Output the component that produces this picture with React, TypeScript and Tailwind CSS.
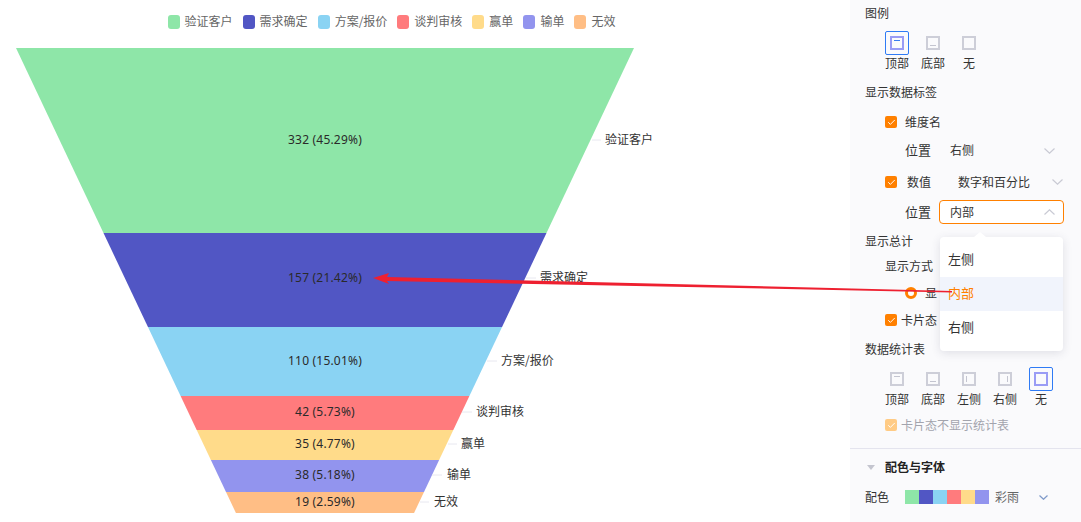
import React from 'react';
import { Check } from 'lucide-react';

const FONT = '"Noto Sans CJK SC", sans-serif';
const VALUE_FONT = '"Noto Sans", "Noto Sans CJK SC", sans-serif';

const LEGEND = [
  { name: '验证客户', color: '#8ee6a8' },
  { name: '需求确定', color: '#5156c4' },
  { name: '方案/报价', color: '#8ad3f3' },
  { name: '谈判审核', color: '#ff7b7d' },
  { name: '赢单', color: '#ffdb8a' },
  { name: '输单', color: '#9294ee' },
  { name: '无效', color: '#ffbe85' },
];

// funnel slices: top y, bottom y, value text, label position and leader line
const SLICES = [
  { y0: 48, y1: 233, value: '332 (45.29%)', vy: 140, lx: 605, ly: 140, l0: 592, l1: 601 },
  { y0: 233, y1: 327, value: '157 (21.42%)', vy: 278, lx: 540, ly: 278, l0: 526, l1: 536 },
  { y0: 327, y1: 396, value: '110 (15.01%)', vy: 361, lx: 501, ly: 361, l0: 487, l1: 497 },
  { y0: 396, y1: 430, value: '42 (5.73%)', vy: 412, lx: 476, ly: 412, l0: 462, l1: 472 },
  { y0: 430, y1: 460, value: '35 (4.77%)', vy: 444, lx: 461, ly: 444, l0: 448, l1: 457 },
  { y0: 460, y1: 492, value: '38 (5.18%)', vy: 475, lx: 447, ly: 475, l0: 432, l1: 442 },
  { y0: 492, y1: 513, value: '19 (2.59%)', vy: 502, lx: 434, ly: 502, l0: 420, l1: 429 },
];

const leftAt = (y: number) => 16 + (y - 48) * 0.473;
const rightAt = (y: number) => 634 - (y - 48) * 0.473;

function Funnel() {
  return (
    <svg width={850} height={478} viewBox="0 44 850 478" className="block">
      {SLICES.map((s, i) => (
        <polygon
          key={i}
          fill={LEGEND[i].color}
          points={`${leftAt(s.y0)},${s.y0} ${rightAt(s.y0)},${s.y0} ${rightAt(s.y1)},${s.y1} ${leftAt(s.y1)},${s.y1}`}
        />
      ))}
      {SLICES.map((s, i) => (
        <g key={i} fontSize={12}>
          <text
            x={325}
            y={s.vy}
            dy="0.36em"
            textAnchor="middle"
            fill="#2a2a2a"
            letterSpacing={0.2}
            style={{ fontFamily: VALUE_FONT }}
          >
            {s.value}
          </text>
          <line x1={s.l0} x2={s.l1} y1={s.ly} y2={s.ly} stroke="#e8e8f0" strokeWidth={1} />
          <text x={s.lx} y={s.ly} dy="0.36em" fill="#333333" style={{ fontFamily: FONT }}>
            {LEGEND[i].name}
          </text>
        </g>
      ))}
    </svg>
  );
}

function Chevron({ up, className }: { up?: boolean; className?: string }) {
  return (
    <svg width={11} height={6} viewBox="0 0 11 6" className={className}>
      <polyline
        points={up ? '0.5,5.5 5.5,0.8 10.5,5.5' : '0.5,0.5 5.5,5.2 10.5,0.5'}
        fill="none"
        stroke="#c9cad4"
        strokeWidth={1.2}
      />
    </svg>
  );
}

type Mark = 'top' | 'bottom' | 'left' | 'right' | 'none';

function LayoutIcon({ mark, label, active }: { mark: Mark; label: string; active?: boolean }) {
  const stroke = active ? '#9a9cf5' : '#cdced8';
  const tick = active ? '#3a7cf0' : '#c4c5d0';
  return (
    <div className="flex w-[36px] flex-col items-center">
      <div
        className={`flex h-[24px] w-[24px] items-center justify-center rounded-[2px] border ${
          active ? 'border-[#2f7bf5]' : 'border-transparent'
        }`}
      >
        <svg width={14} height={14} viewBox="0 0 14 14">
          <rect x={1} y={1} width={12} height={12} fill="none" stroke={stroke} strokeWidth={2} />
          {mark === 'top' && <line x1={4} x2={10} y1={4.5} y2={4.5} stroke={tick} />}
          {mark === 'bottom' && <line x1={4} x2={10} y1={9.5} y2={9.5} stroke={tick} />}
          {mark === 'left' && <line x1={4.5} x2={4.5} y1={4} y2={10} stroke={tick} />}
          {mark === 'right' && <line x1={9.5} x2={9.5} y1={4} y2={10} stroke={tick} />}
        </svg>
      </div>
      <div className="flex h-[16px] items-center text-xs leading-none text-[#333]">{label}</div>
    </div>
  );
}

function Checkbox({ muted }: { muted?: boolean }) {
  return (
    <span
      className={`flex h-[12px] w-[12px] shrink-0 items-center justify-center rounded-[2px] ${
        muted ? 'bg-[#ffcb85]' : 'bg-[#ff8000]'
      }`}
    >
      <Check size={9} color="#fff" strokeWidth={2.5} />
    </span>
  );
}

function ConfigPanel() {
  return (
    <div className="h-[522px] w-[231px] shrink-0 overflow-hidden bg-[#fafafc] text-xs leading-none text-[#333]">
      <div className="flex h-[26px] items-center pl-[15px]">图例</div>
      <div className="flex pl-[29px] pt-[5px]">
        <LayoutIcon mark="top" label="顶部" active />
        <LayoutIcon mark="bottom" label="底部" />
        <LayoutIcon mark="none" label="无" />
      </div>
      <div className="flex h-[42px] items-center pl-[15px]">显示数据标签</div>
      <div className="flex h-[18px] items-center gap-[8px] pl-[35px]">
        <Checkbox />
        <span>维度名</span>
      </div>
      <div className="flex h-[38px] items-center pl-[55px]">
        <span className="w-[45px] pb-[2px] text-[13px]">位置</span>
        <span>右侧</span>
        <Chevron className="ml-[70px] mt-[2px]" />
      </div>
      <div className="flex h-[26px] items-center pl-[35px]">
        <Checkbox />
        <span className="ml-[10px]">数值</span>
        <span className="ml-[27px]">数字和百分比</span>
        <Chevron className="ml-[22px]" />
      </div>
      <div className="flex h-[34px] items-center pl-[55px]">
        <span className="w-[34px] pb-[2px] text-[13px]">位置</span>
        <div className="flex h-[24px] w-[125px] items-center justify-between rounded-[4px] border border-[#ff8000] bg-white pl-[10px] pr-[8px]">
          <span>内部</span>
          <Chevron up />
        </div>
      </div>
      <div className="flex h-[24px] items-center pl-[15px]">显示总计</div>
      <div className="flex h-[26px] items-center pl-[35px]">显示方式</div>
      <div className="flex h-[28px] items-center gap-[8px] pl-[55px]">
        <span className="h-[12px] w-[12px] rounded-full border-[3px] border-[#ff8000] bg-white" />
        <span>显</span>
      </div>
      <div className="flex h-[26px] items-center gap-[4px] pl-[35px]">
        <Checkbox />
        <span>卡片态</span>
      </div>
      <div className="flex h-[32px] items-center pl-[15px]">数据统计表</div>
      <div className="flex pl-[29px] pt-[2px]">
        <LayoutIcon mark="top" label="顶部" />
        <LayoutIcon mark="bottom" label="底部" />
        <LayoutIcon mark="left" label="左侧" />
        <LayoutIcon mark="right" label="右侧" />
        <LayoutIcon mark="none" label="无" active />
      </div>
      <div className="flex h-[36px] items-center gap-[4px] pl-[35px] text-[#a3a4ad]">
        <Checkbox muted />
        <span>卡片态不显示统计表</span>
      </div>
      <div className="h-[6px] border-b border-[#e4e4ee]" />
      <div className="flex h-[36px] items-center pl-[17px]">
        <span className="h-0 w-0 border-x-[4px] border-t-[5px] border-x-transparent border-t-[#c4c5cf]" />
        <span className="ml-[10px] font-bold text-[#222]">配色与字体</span>
      </div>
      <div className="flex h-[24px] items-center pl-[15px]">
        <span className="w-[40px]">配色</span>
        <span className="flex">
          {LEGEND.slice(0, 6).map((l) => (
            <span key={l.name} className="h-[14px] w-[14px]" style={{ background: l.color }} />
          ))}
        </span>
        <span className="ml-[6px] text-[#666]">彩雨</span>
        <svg width={9} height={5} viewBox="0 0 9 5" className="ml-[20px]">
          <polyline points="0.5,0.5 4.5,4.3 8.5,0.5" fill="none" stroke="#7f9ac9" strokeWidth={1.2} />
        </svg>
      </div>
    </div>
  );
}

function DropdownMenu() {
  return (
    <div className="absolute left-[940px] top-[237px] w-[123px] rounded-[4px] bg-white py-[6px] text-[13px] leading-none text-[#333] shadow-[0_2px_10px_rgba(60,60,90,0.14)]">
      <span className="absolute -top-[5px] left-[34px] h-0 w-0 border-x-[6px] border-b-[5px] border-x-transparent border-b-white" />
      <div className="flex h-[34px] items-center pb-[4px] pl-[8px]">左侧</div>
      <div className="flex h-[34px] items-center bg-[#f1f4fc] pb-[4px] pl-[8px] text-[#ff8000]">内部</div>
      <div className="flex h-[34px] items-center pb-[4px] pl-[8px]">右侧</div>
    </div>
  );
}

function Annotation() {
  return (
    <svg width={1081} height={522} className="pointer-events-none absolute left-0 top-0">
      <polygon fill="#ee2030" points="373,278 389,273 387,277 952,291 952,292.4 387,281 389,284" />
    </svg>
  );
}

export default function App() {
  return (
    <div className="relative flex h-[522px] w-[1081px] overflow-hidden bg-white" style={{ fontFamily: FONT }}>
      <div className="w-[850px] shrink-0">
        <div className="flex h-[44px] items-center justify-center gap-[10px] pr-[67px]">
          {LEGEND.map((l) => (
            <div key={l.name} className="flex items-center gap-[5px] text-xs leading-none text-[#666]">
              <span className="h-[14px] w-[12px] rounded-[3px]" style={{ background: l.color }} />
              <span className="pb-[2px]">{l.name}</span>
            </div>
          ))}
        </div>
        <Funnel />
      </div>
      <ConfigPanel />
      <DropdownMenu />
      <Annotation />
    </div>
  );
}
